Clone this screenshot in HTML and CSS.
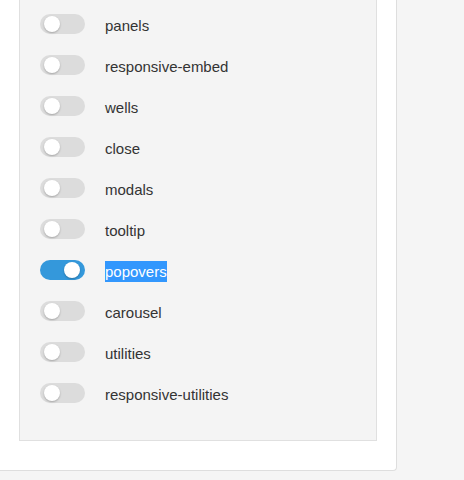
FILE: index.html
```html
<!DOCTYPE html>
<html>
<head>
<meta charset="utf-8">
<link rel="stylesheet" href="styles.css">
</head>
<body>
<div class="card">
  <div class="panel">
    <div class="row"><span class="toggle"><span class="knob"></span></span><span class="label">panels</span></div>
    <div class="row"><span class="toggle"><span class="knob"></span></span><span class="label">responsive-embed</span></div>
    <div class="row"><span class="toggle"><span class="knob"></span></span><span class="label">wells</span></div>
    <div class="row"><span class="toggle"><span class="knob"></span></span><span class="label">close</span></div>
    <div class="row"><span class="toggle"><span class="knob"></span></span><span class="label">modals</span></div>
    <div class="row"><span class="toggle"><span class="knob"></span></span><span class="label">tooltip</span></div>
    <div class="row"><span class="toggle on"><span class="knob"></span></span><span class="label selected">popovers</span></div>
    <div class="row"><span class="toggle"><span class="knob"></span></span><span class="label">carousel</span></div>
    <div class="row"><span class="toggle"><span class="knob"></span></span><span class="label">utilities</span></div>
    <div class="row"><span class="toggle"><span class="knob"></span></span><span class="label">responsive-utilities</span></div>
  </div>
</div>
</body>
</html>
```

FILE: styles.css
```css
html, body {
  margin: 0;
  padding: 0;
  background: #f5f5f5;
  font-family: "Liberation Sans", Arial, sans-serif;
  font-size: 15px;
  color: #333;
}
.card {
  box-sizing: border-box;
  width: 397px;
  margin-top: -40px;
  padding: 0 19px 29px 19px;
  background: #fff;
  border-right: 1px solid #dedede;
  border-bottom: 1px solid #dedede;
  border-radius: 0 0 4px 0;
}
.panel {
  box-sizing: border-box;
  width: 358px;
  padding: 43px 0 27px 20px;
  background: #f4f4f4;
  border: 1px solid #e0e0e0;
  border-top: none;
}
.row {
  display: flex;
  align-items: center;
  height: 41px;
  gap: 20px;
}
.toggle {
  position: relative;
  flex: none;
  width: 45px;
  height: 20px;
  border-radius: 10px;
  background: #dcdcdc;
}
.toggle .knob {
  position: absolute;
  top: 2px;
  left: 4px;
  width: 16px;
  height: 16px;
  border-radius: 50%;
  background: #fff;
  box-shadow: 0 1px 2px rgba(0, 0, 0, 0.25);
}
.toggle.on {
  background: #3498db;
}
.toggle.on .knob {
  left: 24px;
}
.label {
  line-height: 21px;
  position: relative;
  top: 2px;
}
.label.selected {
  background: #3297fd;
  color: #fff;
}
```
